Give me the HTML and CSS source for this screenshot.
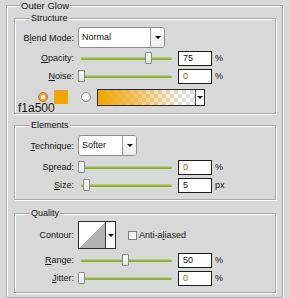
FILE: index.html
```html
<!DOCTYPE html>
<html>
<head>
<meta charset="utf-8">
<link rel="stylesheet" href="styles.css">
</head>
<body>
<fieldset class="grp outer">
  <legend>Outer Glow</legend>

  <fieldset class="grp sub structure">
    <legend>Structure</legend>
    <div class="row r-sel">
      <span class="lbl">B<u>l</u>end Mode:</span>
      <div class="select blend"><span class="val">Normal</span><span class="btn"><i class="tri"></i></span></div>
    </div>
    <div class="row r-sld">
      <span class="lbl"><u>O</u>pacity:</span>
      <div class="slider"><div class="track"></div><div class="thumb" style="left:67px"></div></div>
      <div class="num">75</div><span class="unit">%</span>
    </div>
    <div class="row r-sld">
      <span class="lbl"><u>N</u>oise:</span>
      <div class="slider"><div class="track"></div><div class="thumb" style="left:0px"></div></div>
      <div class="num zero">0</div><span class="unit">%</span>
    </div>
    <div class="color-row">
      <span class="radio on"></span>
      <span class="swatch"></span>
      <span class="radio"></span>
      <div class="grad"><span class="grad-fill"></span><span class="grad-btn"><i class="tri"></i></span></div>
    </div>
    <div class="hex">f1a500</div>
  </fieldset>

  <fieldset class="grp sub elements">
    <legend>Elements</legend>
    <div class="row r-sel">
      <span class="lbl"><u>T</u>echnique:</span>
      <div class="select tech"><span class="val">Softer</span><span class="btn"><i class="tri"></i></span></div>
    </div>
    <div class="row r-sld first">
      <span class="lbl">S<u>p</u>read:</span>
      <div class="slider"><div class="track"></div><div class="thumb" style="left:0px"></div></div>
      <div class="num zero">0</div><span class="unit">%</span>
    </div>
    <div class="row r-sld">
      <span class="lbl"><u>S</u>ize:</span>
      <div class="slider"><div class="track"></div><div class="thumb" style="left:5px"></div></div>
      <div class="num">5</div><span class="unit">px</span>
    </div>
  </fieldset>

  <fieldset class="grp sub quality">
    <legend>Quality</legend>
    <div class="row r-contour">
      <span class="lbl">Contour:</span>
      <div class="contour"><span class="curve"></span><span class="c-btn"><i class="tri"></i></span></div>
      <span class="check"></span><span class="check-lbl">Anti-a<u>l</u>iased</span>
    </div>
    <div class="row r-sld first">
      <span class="lbl"><u>R</u>ange:</span>
      <div class="slider"><div class="track"></div><div class="thumb" style="left:44px"></div></div>
      <div class="num">50</div><span class="unit">%</span>
    </div>
    <div class="row r-sld">
      <span class="lbl"><u>J</u>itter:</span>
      <div class="slider"><div class="track"></div><div class="thumb" style="left:0px"></div></div>
      <div class="num zero">0</div><span class="unit">%</span>
    </div>
  </fieldset>
</fieldset>
</body>
</html>
```

FILE: styles.css
```css
* { box-sizing: border-box; }
html, body { margin: 0; padding: 0; }
body {
  background: #d8d8d8;
  width: 290px;
  height: 298px;
  overflow: hidden;
  font-family: "Liberation Sans", Arial, sans-serif;
  font-size: 9px;
  color: #151515;
}
u { text-decoration: underline; text-underline-offset: 1px; }

.grp {
  margin: 0;
  padding: 0;
  min-width: 0;
  border: 1px solid #a9a9a9;
  box-shadow: inset 1px 1px 0 #fff, 1px 1px 0 #fff;
}
.grp > legend {
  padding: 0 1px;
  margin-left: 15px;
  height: 10px;
  line-height: 10px;
  font-size: 9px;
  background: #d8d8d8;
}
.outer {
  margin-left: 6px;
  width: 277px;
  padding: 2px 0 4px;
}
.outer > legend {
  margin-left: 13px;
  height: 11px;
  line-height: 11px;
  font-size: 9.5px;
}
.sub { margin-left: 7px; width: 262px; }
.structure { padding: 4px 0 1px; }
.elements { margin-top: 6px; padding: 5px 0 5px; }
.quality { margin-top: 8px; padding: 3px 0 5px; }

.row { display: flex; align-items: center; }
.r-sel { height: 21px; }
.r-sld { height: 18px; }
.structure .r-sel + .r-sld { margin-top: 1px; }
.r-sld.first { margin-top: 2px; }
.r-contour { height: 28px; }

.lbl {
  width: 59px;
  margin-right: 4px;
  text-align: right;
  white-space: nowrap;
}

/* dropdown select */
.select {
  display: flex;
  height: 21px;
  border: 1px solid #8d8d8d;
  border-radius: 3px;
  background: #fff;
}
.select.blend { width: 87px; }
.select.tech { width: 59px; }
.select .val { flex: 1; padding-left: 3px; line-height: 19px; }
.select .btn {
  width: 14px;
  border-left: 1px solid #9c9c9c;
  border-radius: 0 2px 2px 0;
  background: linear-gradient(#fdfdfd, #ececec);
  display: flex;
  align-items: center;
  justify-content: center;
}
.tri {
  display: block;
  width: 0;
  height: 0;
  border-left: 3px solid transparent;
  border-right: 3px solid transparent;
  border-top: 3px solid #000;
}

/* slider */
.slider {
  position: relative;
  width: 96px;
  height: 18px;
  display: flex;
  align-items: center;
}
.track {
  flex: 1;
  margin: 0 2px 0 3px;
  height: 3px;
  border-radius: 2px;
  background: linear-gradient(#c4da86, #9cba4c 50%, #7f9d36);
}
.thumb {
  position: absolute;
  top: 3px;
  width: 7px;
  height: 12px;
  border: 1px solid #8a8a8a;
  border-radius: 1px;
  background: linear-gradient(#ffffff, #e2e2e2);
}

/* number field */
.num {
  width: 34px;
  height: 15px;
  margin-left: 4px;
  padding-left: 4px;
  border: 1px solid #1c1c1c;
  background: #fff;
  line-height: 13px;
}
.num.zero { color: #8a6414; }
.unit { margin-left: 3px; }

/* color row */
.color-row {
  display: flex;
  align-items: center;
  height: 14px;
  margin-top: 5px;
  padding-left: 23px;
}
.radio {
  width: 10px;
  height: 10px;
  border-radius: 50%;
  border: 1px solid #8a8a8a;
  background: radial-gradient(circle at 50% 40%, #ffffff, #e6e6e6);
  flex: none;
}
.radio.on {
  border-color: #c8741a;
  background: radial-gradient(circle, #fff4dc 0 28%, #f7b347 45%, #e98b1e 80%, #d27318 100%);
}
.swatch {
  width: 14px;
  height: 14px;
  margin: 0 13px 0 6px;
  background: #f1a500;
  flex: none;
}
.grad {
  display: flex;
  width: 108px;
  height: 17px;
  margin-left: 6px;
  border: 1px solid #2c2c2c;
  flex: none;
}
.grad-fill {
  flex: 1;
  background:
    linear-gradient(to right, #f1a500 0%, rgba(241,165,0,0.6) 40%, rgba(241,165,0,0) 88%),
    repeating-conic-gradient(#dedede 0 25%, #ffffff 0 50%) 0 0 / 8px 8px;
}
.grad-btn {
  width: 9px;
  border-left: 1px solid #555;
  background: #fafafa;
  display: flex;
  align-items: center;
  justify-content: center;
}
.hex {
  height: 8px;
  line-height: 8px;
  font-size: 12px;
  padding-left: 3px;
}

/* contour */
.contour {
  display: flex;
  width: 38px;
  height: 28px;
  border: 1px solid #2a2a2a;
  background: #fff;
}
.curve {
  flex: 1;
  background: linear-gradient(to bottom right, #ffffff 50%, #b2b2b2 50%);
}
.c-btn {
  width: 10px;
  border-left: 1px solid #3a3a3a;
  background: #fafafa;
  display: flex;
  align-items: center;
  justify-content: center;
}
.check {
  width: 9px;
  height: 9px;
  margin-left: 12px;
  border: 1px solid #7d7d7d;
  background: linear-gradient(135deg, #e8e8e8, #ffffff);
}
.check-lbl { margin-left: 2px; }
```
